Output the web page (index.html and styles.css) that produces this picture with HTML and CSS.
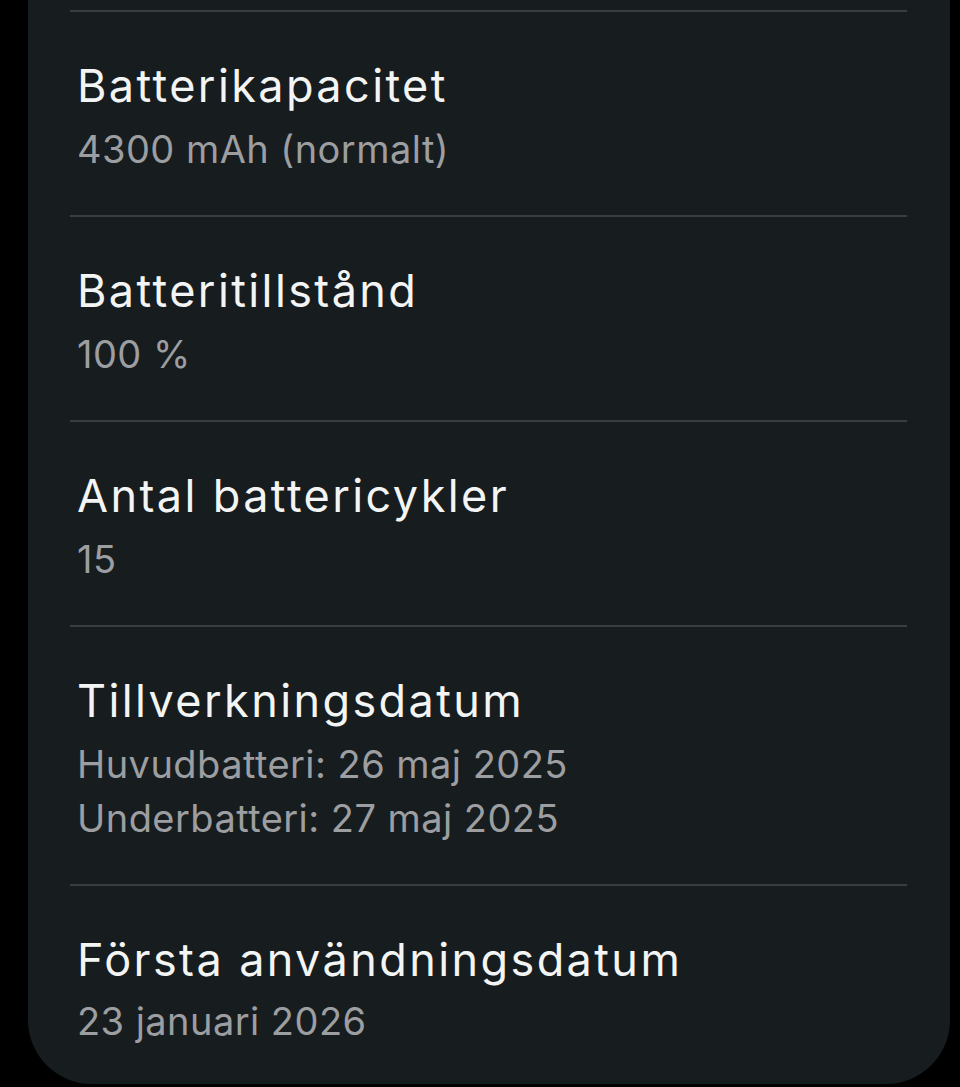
FILE: index.html
```html
<!DOCTYPE html>
<html lang="sv">
<head>
  <meta charset="UTF-8">
  <meta name="viewport" content="width=device-width, initial-scale=1.0">
  <title>Batteriinformation</title>
  <link rel="stylesheet" href="styles.css">
</head>
<body>
  <div class="card">
    <div class="item">
      <div class="title">Batterikapacitet</div>
      <div class="sub">4300 mAh (normalt)</div>
    </div>
    <div class="item">
      <div class="title">Batteritillstånd</div>
      <div class="sub">100 %</div>
    </div>
    <div class="item">
      <div class="title">Antal battericykler</div>
      <div class="sub">15</div>
    </div>
    <div class="item">
      <div class="title">Tillverkningsdatum</div>
      <div class="sub">Huvudbatteri: 26 maj 2025</div>
      <div class="sub">Underbatteri: 27 maj 2025</div>
    </div>
    <div class="item last">
      <div class="title">Första användningsdatum</div>
      <div class="sub">23 januari 2026</div>
    </div>
  </div>
</body>
</html>
```

FILE: styles.css
```css
html, body { margin: 0; padding: 0; background: #000; }
body { font-family: Inter, Roboto, "Noto Sans", sans-serif; height: 1087px; overflow: hidden; }
.card { margin: 0 10px 0 28px; padding: 10px 43px 0 42px; background: #171c1f; border-radius: 0 0 64px 64px; height: 1084px; box-sizing: border-box; }
.item { border-top: 2px solid #393e42; padding: 38px 0 39px 7px; }
.item.last { padding-bottom: 34px; }
.title { color: #f3f4f4; font-size: 45px; line-height: 72px; letter-spacing: 2.4px; }
.sub { color: #9c9ea1; font-size: 38px; line-height: 54px; letter-spacing: 0.45px; }
.item.last .sub { margin-top: -2px; }
```
